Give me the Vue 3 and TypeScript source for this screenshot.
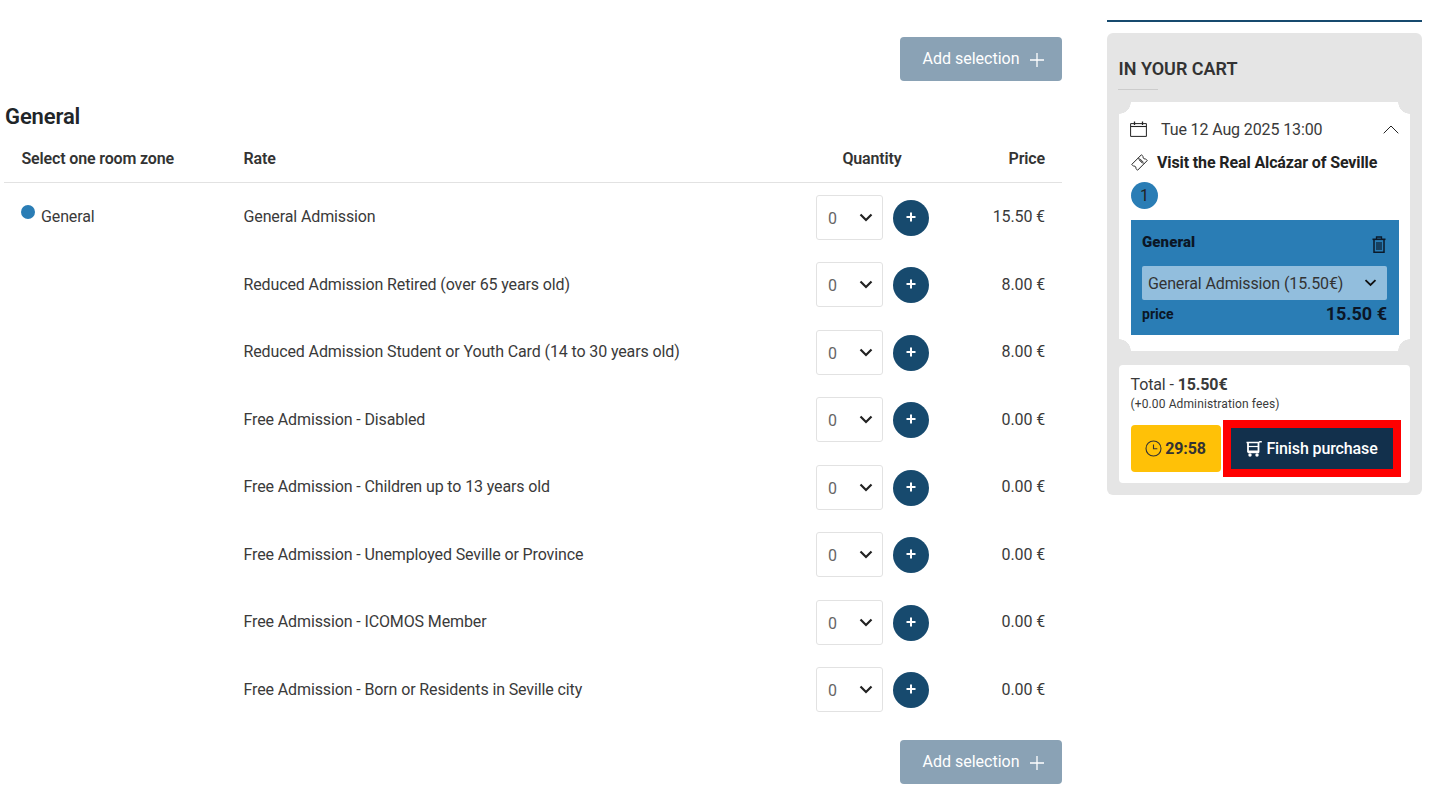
<script setup lang="ts">
interface Rate { name: string; price: string }
const rates: Rate[] = [
  { name: 'General Admission', price: '15.50 €' },
  { name: 'Reduced Admission Retired (over 65 years old)', price: '8.00 €' },
  { name: 'Reduced Admission Student or Youth Card (14 to 30 years old)', price: '8.00 €' },
  { name: 'Free Admission - Disabled', price: '0.00 €' },
  { name: 'Free Admission - Children up to 13 years old', price: '0.00 €' },
  { name: 'Free Admission - Unemployed Seville or Province', price: '0.00 €' },
  { name: 'Free Admission - ICOMOS Member', price: '0.00 €' },
  { name: 'Free Admission - Born or Residents in Seville city', price: '0.00 €' },
]
</script>

<template>
  <div class="page">
    <main class="main">
      <div class="actions top">
        <button class="add">Add selection
          <svg width="16" height="16" viewBox="0 0 16 16"><path d="M8 1v14M1 8h14" stroke="#fff" stroke-width="1.3" fill="none" /></svg>
        </button>
      </div>
      <h2 class="title">General</h2>
      <div class="head">
        <div class="c-zone">Select one room zone</div>
        <div class="c-rate">Rate</div>
        <div class="c-qty">Quantity</div>
        <div class="c-price">Price</div>
      </div>
      <div class="body">
        <div class="c-zone zone-cell"><span class="dot"></span><span>General</span></div>
        <div class="rows">
          <div v-for="r in rates" :key="r.name" class="row">
            <div class="c-rate">{{ r.name }}</div>
            <div class="c-qty qty">
              <div class="sel"><span>0</span>
                <svg width="14" height="9" viewBox="0 0 14 9"><path d="M1.5 1.5 7 7l5.5-5.500" stroke="#222" stroke-width="2.2" fill="none" /></svg>
              </div>
              <span class="plus"><svg width="10" height="10" viewBox="0 0 10 10"><path d="M5 .5v9M.5 5h9" stroke="#fff" stroke-width="2" fill="none" /></svg></span>
            </div>
            <div class="c-price">{{ r.price }}</div>
          </div>
        </div>
      </div>
      <div class="actions bottom">
        <button class="add">Add selection
          <svg width="16" height="16" viewBox="0 0 16 16"><path d="M8 1v14M1 8h14" stroke="#fff" stroke-width="1.3" fill="none" /></svg>
        </button>
      </div>
    </main>

    <aside class="side">
      <div class="rule"></div>
      <div class="cart">
        <h3 class="cart-title">IN YOUR CART</h3>
        <div class="underline"></div>
        <div class="ticket">
          <div class="date-row">
            <svg class="cal" width="17" height="16" viewBox="0 0 17 16"><path d="M.6 2.600h15.800v12.800H.6z" stroke="#222" stroke-width="1" fill="none" /><path d="M.6 5.500h15.800" stroke="#222" stroke-width="1.100" fill="none" /><path d="M4.500.5v3.500M12.500.5v3.500" stroke="#222" stroke-width="1.300" fill="none" /></svg>
            <span class="date">Tue 12 Aug 2025 13:00</span>
            <svg class="caret" width="16" height="9" viewBox="0 0 16 9"><path d="M.7 8.300 8 1l7.300 7.300" stroke="#222" stroke-width="1" fill="none" /></svg>
          </div>
          <div class="visit">
            <svg width="17" height="17" viewBox="0 0 17 17"><path d="M.8 10.400 10.400.8l1.900 1.900a1.500 1.500 0 0 0 2 2l1.900 1.900-9.600 9.600-1.900-1.900a1.500 1.500 0 0 0-2-2z" stroke="#222" stroke-width="1" fill="none" /><path d="M7.300 3.900l5.800 5.800" stroke="#222" stroke-width="1" fill="none" /><path d="M7.600 5.600l3.800 3.800M9 4.800l3.200 3.200" stroke="#222" stroke-width=".7" fill="none" /></svg>
            <strong>Visit the Real Alcázar of Seville</strong>
          </div>
          <span class="badge">1</span>
          <div class="panel">
            <div class="panel-head"><strong>General</strong>
              <svg width="14" height="17" viewBox="0 0 14 17"><path d="M.5 3.300h13" stroke="#0b1a2a" stroke-width="1.600" fill="none" /><path d="M4.500 3V1h5v2" stroke="#0b1a2a" stroke-width="1.300" fill="none" /><path d="M2 3.500v12.800h10V3.500" stroke="#0b1a2a" stroke-width="1.500" fill="none" /><path d="M5 6v8M7 6v8M9 6v8" stroke="#0b1a2a" stroke-width="1.200" fill="none" /></svg>
            </div>
            <div class="panel-sel"><span>General Admission (15.50€)</span>
              <svg width="13" height="8" viewBox="0 0 13 8"><path d="M1.500 1.200 6.500 6l5-4.800" stroke="#111" stroke-width="1.800" fill="none" /></svg>
            </div>
            <div class="panel-price"><strong class="p-l">price</strong><strong class="p-v">15.50 €</strong></div>
          </div>
        </div>
        <div class="total">
          <div class="total-line">Total - <strong>15.50€</strong></div>
          <div class="fees">(+0.00 Administration fees)</div>
          <div class="buttons">
            <div class="timer">
              <svg width="17" height="17" viewBox="0 0 17 17"><circle cx="8.500" cy="8.500" r="7.500" stroke="#333" stroke-width="1.100" fill="none" /><path d="M8.500 4.500v4.300h3.800" stroke="#333" stroke-width="1.100" fill="none" /></svg>
              <strong>29:58</strong>
            </div>
            <button class="finish">
              <svg width="16" height="16" viewBox="0 0 16 16"><path d="M.5 1.500h12.300L13.800.7h2" stroke="#fff" stroke-width="1.400" fill="none" /><path d="M2 2v8.500h10.500V2" stroke="#fff" stroke-width="1.800" fill="none" /><path d="M2 5.500h10.500" stroke="#fff" stroke-width="1.200" fill="none" /><path d="M2 11.500h11" stroke="#fff" stroke-width="1.400" fill="none" /><circle cx="4" cy="14" r="1.700" fill="#fff" /><circle cx="11" cy="14" r="1.700" fill="#fff" /></svg>
              Finish purchase
            </button>
          </div>
        </div>
      </div>
    </aside>
  </div>
</template>

<style>
html, body { margin: 0; background: #fff; }
</style>

<style scoped>
.page {
  display: flex;
  width: 1434px;
  height: 799px;
  overflow: hidden;
  font-family: Roboto, "Liberation Sans", sans-serif;
  font-size: 16px;
  letter-spacing: -0.12px;
  color: #3a3a3a;
  box-sizing: border-box;
  padding-left: 4px;
}
.main { width: 1058px; flex: none; }
.actions { display: flex; justify-content: flex-end; }
.actions.top { padding-top: 37px; }
.actions.bottom { padding-top: 17px; }
.add {
  display: flex;
  align-items: center;
  justify-content: center;
  gap: 9px;
  width: 162px;
  height: 44px;
  border: 0;
  border-radius: 4px;
  background: #8aa2b5;
  color: #fff;
  font: 400 16px Roboto, sans-serif;
  letter-spacing: 0;
  padding: 0 0 2px 5px;
}
.add svg { margin-top: 3px; }
.title { margin: 21px 0 0; padding-left: 1px; font: 600 22px/30px Roboto, sans-serif; color: #212529; height: 30px; }
.head {
  display: flex;
  align-items: center;
  height: 51px;
  padding-top: 3px;
  box-sizing: border-box;
  border-bottom: 1px solid #e2e2e2;
  font-weight: 600;
  color: #333;
  letter-spacing: -0.15px;
}
.c-zone { width: 222px; padding-left: 17.5px; box-sizing: content-box; flex: none; }
.c-rate { flex: 1; }
.head .c-qty { width: 120px; text-align: center; margin-right: 34px; }
.c-price { width: 96px; padding-right: 17px; box-sizing: border-box; text-align: right; flex: none; }
.body { display: flex; }
.zone-cell { display: flex; align-items: flex-start; gap: 6px; padding-top: 22px; }
.dot { width: 14px; height: 14px; border-radius: 50%; background: #2a7db5; margin-left: -0.5px; }
.zone-cell span:last-child { line-height: 18px; margin-top: 3px; }
.rows { flex: 1; }
.row { display: flex; align-items: center; height: 67.5px; }
.qty { display: flex; align-items: flex-start; gap: 10px; width: 133px; flex: none; padding-top: 1.1px; }
.sel {
  display: flex;
  align-items: center;
  justify-content: space-between;
  width: 67px;
  height: 45px;
  box-sizing: border-box;
  border: 1px solid #e2e2e2;
  border-radius: 3px;
  padding: 0 9px 0 11px;
  color: #666;
}
.sel span { padding-top: 2px; }
.plus {
  width: 36px;
  height: 36px;
  margin-top: 5px;
  border-radius: 50%;
  background: #174a6e;
  display: flex;
  align-items: center;
  justify-content: center;
  padding-bottom: 2px;
  box-sizing: border-box;
}
.row .c-price { width: 113px; }

.side { width: 315px; margin-left: 45px; flex: none; padding-top: 20px; }
.rule { height: 2px; background: #174a6e; }
.cart { margin-top: 11px; height: 462px; box-sizing: border-box; background: #e5e5e5; border-radius: 6px; padding: 24px 12px 0; }
.cart-title { margin: 0 0 0 -0.5px; font: 600 18px/24px Roboto, sans-serif; letter-spacing: 0; color: #333; }
.underline { width: 40px; height: 1px; background: #ccc; margin: 8px 0 12px -1px; }
.ticket {
  height: 249px;
  box-sizing: border-box;
  padding: 17px 11px 0 12px;
  background:
    radial-gradient(circle 12px at 0 0, #e5e5e5 11.5px, transparent 12px),
    radial-gradient(circle 12px at 100% 0, #e5e5e5 11.5px, transparent 12px),
    radial-gradient(circle 12px at 0 100%, #e5e5e5 11.5px, transparent 12px),
    radial-gradient(circle 12px at 100% 100%, #e5e5e5 11.5px, transparent 12px),
    #fff;
}
.date-row { display: flex; align-items: center; height: 20px; }
.cal { margin-left: -1px; }
.date { margin-left: 14px; flex: 1; }
.visit { display: flex; align-items: center; gap: 9px; margin-top: 13px; height: 20px; color: #222; }
.badge {
  display: flex;
  align-items: center;
  justify-content: center;
  width: 27px;
  height: 27px;
  border-radius: 50%;
  background: #2a7db5;
  color: #222;
  margin-top: 10px;
}
.panel { margin-top: 11px; height: 115px; background: #2a7db5; padding: 13px 12px 0 11px; box-sizing: border-box; color: #0b1626; }
.panel-head { display: flex; justify-content: space-between; align-items: flex-start; height: 33px; font-size: 15px; font-weight: 600; letter-spacing: 0.1px; }
.panel-head svg { margin-top: 3px; margin-right: 1px; }
.panel-sel {
  display: flex;
  align-items: center;
  justify-content: space-between;
  height: 34px;
  background: #92bedd;
  border-radius: 2px;
  padding: 0 10px 0 6px;
  color: #333;
}
.panel-price { display: flex; justify-content: space-between; align-items: center; height: 27px; letter-spacing: 0; }
.p-l { font-size: 14px; }
.p-v { font-size: 18px; }
.total { margin-top: 14px; height: 118px; box-sizing: border-box; background: #fff; border-radius: 4px; padding: 11px 9px 0 12px; }
.total-line { line-height: 18px; margin-left: -0.5px; }
.fees { font-size: 12px; line-height: 14px; margin: 3px 0 0 -0.5px; letter-spacing: 0.12px; }
.buttons { display: flex; align-items: center; gap: 2px; margin-top: 9px; }
.timer {
  display: flex;
  align-items: center;
  justify-content: center;
  gap: 3px;
  width: 90px;
  height: 47px;
  background: #ffc107;
  border-radius: 4px;
  color: #333;
  padding-right: 1px;
  box-sizing: border-box;
}
.finish {
  display: flex;
  align-items: center;
  justify-content: center;
  gap: 4px;
  width: 178px;
  height: 57px;
  border: 8px solid #f00;
  background: #12304c;
  color: #fff;
  font: 500 16px Roboto, sans-serif;
  letter-spacing: -0.12px;
  padding: 0;
}
</style>
